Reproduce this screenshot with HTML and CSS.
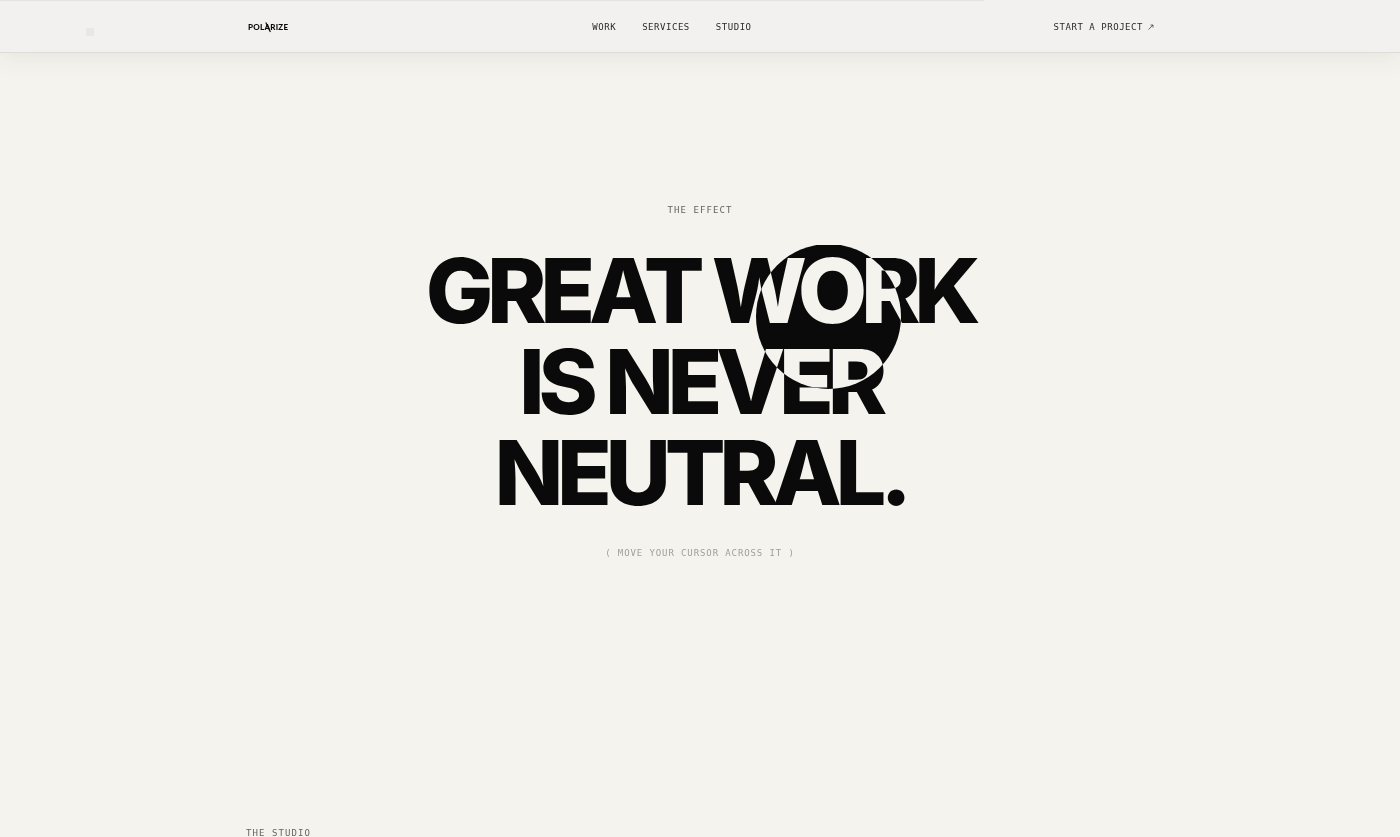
FILE: index.html
```
<!DOCTYPE html>
<html lang="en">
<head>
  <meta charset="UTF-8" />
  <meta name="viewport" content="width=device-width, initial-scale=1" />
  <title>Polarize</title>
  <link rel="stylesheet" href="styles.css">
</head>
<body>
  <header class="nav">
    <div class="progress"></div>
    <div class="container nav-inner">
      <a class="logo" href="#">POLARIZE
        <svg class="logo-slash" viewBox="0 0 6 11" aria-hidden="true"><path d="M0.8 0.5 L5.4 10" /></svg>
      </a>
      <nav class="nav-links">
        <a href="#work">WORK</a>
        <a href="#services">SERVICES</a>
        <a href="#studio">STUDIO</a>
      </nav>
      <a class="nav-cta" href="#contact">START A PROJECT
        <svg class="arrow" viewBox="0 0 6 6" aria-hidden="true"><path d="M0.5 5.5 L5 1 M2.5 1 H5 V3.5" /></svg>
      </a>
    </div>
    <span class="cursor-dot"></span>
  </header>

  <main>
    <section class="effect">
      <p class="eyebrow">THE EFFECT</p>
      <h1 class="headline">GREAT WORK<br>IS NEVER<br>NEUTRAL.<span class="lens"></span></h1>
      <p class="hint">( MOVE YOUR CURSOR ACROSS IT )</p>
    </section>
    <section class="studio" id="studio">
      <div class="container">
        <p class="eyebrow">THE STUDIO</p>
      </div>
    </section>
  </main>
</body>
</html>
```

FILE: styles.css
```
* {
  box-sizing: border-box;
  margin: 0;
  padding: 0;
}
body {
  height: 100vh;
  overflow: hidden;
  background: #f4f3ee;
  color: #0a0a0a;
  font-family: "DejaVu Sans Mono", monospace;
  font-size: 9px;
  line-height: 14px;
}
a {
  color: inherit;
  text-decoration: none;
}
.container {
  max-width: 956px;
  margin: 0 auto;
  padding: 0 24px;
}

/* header */
.nav {
  position: relative;
  z-index: 2;
  background: #f3f1ef;
  border-bottom: 1px solid #dddcd9;
  box-shadow: 0 4px 24px rgba(60, 60, 30, 0.08);
}
.progress {
  position: absolute;
  top: 0;
  left: 0;
  width: 70.3%;
  height: 1px;
  background: #e5e3e1;
}
.nav-inner {
  display: flex;
  align-items: center;
  justify-content: space-between;
  height: 52px;
  padding-top: 2px;
}
.logo {
  position: relative;
  padding: 0 2px;
  font-family: Lato, sans-serif;
  font-size: 8px;
  font-weight: 900;
  letter-spacing: 0.03em;
}
.logo-slash {
  position: absolute;
  top: 2px;
  left: 19px;
  width: 6px;
  height: 11px;
  fill: none;
  stroke: #0a0a0a;
  stroke-width: 1.2;
}
.nav-links {
  display: flex;
  gap: 26px;
  letter-spacing: 0.06em;
}
.nav-links a,
.nav-cta {
  color: #2a2a2a;
}
.nav-cta {
  display: flex;
  align-items: center;
  gap: 5px;
  letter-spacing: 0.06em;
}
.arrow {
  width: 6px;
  height: 6px;
  fill: none;
  stroke: #444;
  stroke-width: 0.8;
}
.cursor-dot {
  position: absolute;
  top: 28px;
  left: 86px;
  width: 8px;
  height: 8px;
  border-radius: 2px;
  background: #e8e7e5;
}

/* headline with inverting lens */
.effect {
  padding: 150px 24px 266px;
  background: #f4f3ee;
  text-align: center;
}
.eyebrow {
  color: #66645f;
  letter-spacing: 0.12em;
}
.headline {
  position: relative;
  margin: 28px 0;
  font-family: Inter, sans-serif;
  font-size: 90px;
  font-weight: 800;
  line-height: 91px;
  letter-spacing: -0.07em;
}
.lens {
  position: absolute;
  top: -1px;
  left: calc(50% + 56px);
  width: 145px;
  height: 145px;
  border-radius: 50%;
  background: #fefdf8;
  mix-blend-mode: difference;
  clip-path: inset(1px 0 0 0);
}
.hint {
  color: #a09e98;
  letter-spacing: 0.1em;
}
```
